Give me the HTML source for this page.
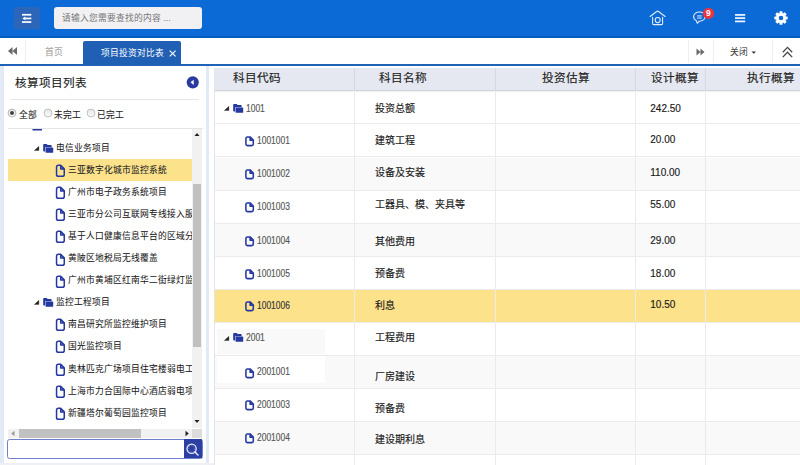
<!DOCTYPE html>
<html lang="zh-CN">
<head>
<meta charset="utf-8">
<style>
*{box-sizing:border-box;margin:0;padding:0}
html,body{width:800px;height:465px;overflow:hidden;background:#fff;font-family:"Liberation Sans",sans-serif;color:#333}
.a{position:absolute;white-space:nowrap}
#hdr{position:absolute;left:0;top:0;width:800px;height:38px;background:#0b6ad5;border-bottom:2px solid #075cc0}
#menu{left:14px;top:7px;width:26px;height:22px;background:#2d66b8;border-radius:2px}
#search{left:54px;top:7px;width:148px;height:22px;background:#f1f1f3;border-radius:3px;font-size:8.75px;color:#777;line-height:22px;padding-left:8px}
#tabs{position:absolute;left:0;top:38px;width:800px;height:26px;background:#fff}
#tabline{position:absolute;left:0;top:64px;width:800px;height:2px;background:#2062b8}
.sep{position:absolute;top:40px;width:1px;height:23px;background:#eeeeee}
#act{left:83px;top:41px;width:98px;height:23px;background:#2060b4;border-radius:2px 2px 0 0;color:#fff;font-size:8.75px;line-height:25px}
#strip{position:absolute;left:0;top:66px;width:3.5px;height:399px;background:#e2eaf6}
#strip2{position:absolute;left:206px;top:66px;width:3px;height:399px;background:#e2eaf6}
#bot{position:absolute;left:0;top:463.4px;width:214px;height:2px;background:#eef0f3}
.tt{font-size:8.75px;color:#222;line-height:12px}
.th{font-size:11.6px;color:#222;line-height:14px}
.code{font-size:10.2px;color:#555;line-height:12px;transform:scaleX(0.83);transform-origin:0 0}
.nm{font-size:10px;color:#1a1a1a;line-height:12px}
.row{position:absolute;left:214px;width:586px}
.vl{position:absolute;width:1px;background:#ebebeb}
.nm,.th,.code{-webkit-text-stroke:0.15px currentColor}
.tt{-webkit-text-stroke:0.06px currentColor}
</style>
</head>
<body>
<div id="hdr"></div>
<div class="a" id="menu">
  <svg width="26" height="22" viewBox="0 0 26 22" style="position:absolute;left:0;top:0">
    <rect x="8" y="6.9" width="9.3" height="1.7" fill="#fff"/>
    <rect x="10.6" y="10.6" width="6.7" height="1.7" fill="#fff"/>
    <rect x="8" y="14.2" width="9.3" height="1.7" fill="#fff"/>
    <path d="M8.4 11.45 L11.2 9.6 L11.2 13.3 Z" fill="#fff"/>
  </svg>
</div>
<div class="a" id="search">请输入您需要查找的内容 ...</div>

<!-- header icons -->
<svg class="a" style="left:648px;top:8px" width="20" height="20" viewBox="0 0 20 20">
  <path d="M2.1 8.5 L8.7 3.5 Q9.6 2.8 10.5 3.5 L17.1 8.5 M4.6 9.2 L4.6 15.4 Q4.6 16.6 5.8 16.6 L13.4 16.6 Q14.6 16.6 14.6 15.4 L14.6 9.2" fill="none" stroke="#e6eefa" stroke-width="1.05" stroke-linecap="round" stroke-linejoin="round"/>
  <circle cx="9.7" cy="12.1" r="2.55" fill="none" stroke="#e6eefa" stroke-width="1.05"/>
</svg>
<svg class="a" style="left:690px;top:3px" width="28" height="24" viewBox="0 0 28 24">
  <path d="M9.3 9 C6 9 3.6 11 3.6 13.6 C3.6 15.3 4.6 16.8 6.3 17.6 L7.3 20.3 L9.3 18.2 C12.6 18.2 15.1 16.2 15.1 13.6 C15.1 11 12.6 9 9.3 9 Z" fill="none" stroke="#e6eefa" stroke-width="1.05" stroke-linejoin="round"/>
  <rect x="7.1" y="12.4" width="4.6" height="0.75" fill="#d8e4f6"/>
  <rect x="7.1" y="13.6" width="4.6" height="0.75" fill="#d8e4f6"/>
  <rect x="7.1" y="14.8" width="4.6" height="0.75" fill="#d8e4f6"/>
  <circle cx="18.5" cy="10.4" r="5.6" fill="#ec3441"/>
  <text x="18.4" y="13.4" font-family="Liberation Sans" font-size="8.5" font-weight="bold" fill="#fff" text-anchor="middle">9</text>
</svg>
<svg class="a" style="left:735px;top:13px" width="11" height="10" viewBox="0 0 11 10">
  <rect x="0" y="1" width="10.2" height="1.8" fill="#e8f0fb"/>
  <rect x="0" y="4.2" width="10.2" height="1.8" fill="#e8f0fb"/>
  <rect x="0" y="7.5" width="10.2" height="1.8" fill="#e8f0fb"/>
</svg>
<svg class="a" style="left:773px;top:10.2px" width="16" height="16" viewBox="0 0 16 16">
  <path fill-rule="evenodd" fill="#fff" d="M6.30 3.40 L6.65 1.30 L9.35 1.30 L9.70 3.40 L10.05 3.55 L11.78 2.31 L13.69 4.22 L12.45 5.95 L12.60 6.30 L14.70 6.65 L14.70 9.35 L12.60 9.70 L12.45 10.05 L13.69 11.78 L11.78 13.69 L10.05 12.45 L9.70 12.60 L9.35 14.70 L6.65 14.70 L6.30 12.60 L5.95 12.45 L4.22 13.69 L2.31 11.78 L3.55 10.05 L3.40 9.70 L1.30 9.35 L1.30 6.65 L3.40 6.30 L3.55 5.95 L2.31 4.22 L4.22 2.31 L5.95 3.55Z M8 5.7 A2.3 2.3 0 1 0 8 10.3 A2.3 2.3 0 1 0 8 5.7Z"/>
</svg>

<!-- tabs -->
<div id="tabs"></div>
<svg class="a" style="left:7px;top:46px" width="12" height="10" viewBox="0 0 12 10">
  <path d="M1 5 L5.5 1 L5.5 9 Z M5.5 5 L10 1 L10 9 Z" fill="#6a6a6a"/>
</svg>
<div class="sep" style="left:25px"></div>
<div class="a tt" style="left:44.5px;top:46.2px;color:#999">首页</div>
<div class="a" id="act"><span style="position:absolute;left:18px">项目投资对比表</span><svg style="position:absolute;left:86px;top:8.8px" width="8" height="8" viewBox="0 0 8 8"><path d="M0.7 0.6 L6.6 6.3 M6.6 0.6 L0.7 6.3" stroke="#fff" stroke-width="1.15"/></svg></div>
<div class="sep" style="left:688px"></div>
<svg class="a" style="left:695px;top:47px" width="12" height="10" viewBox="0 0 12 10">
  <path d="M1.5 1.5 L5.5 5 L1.5 8.5 Z M5.5 1.5 L9.5 5 L5.5 8.5 Z" fill="#6a6a6a"/>
</svg>
<div class="sep" style="left:713px"></div>
<div class="a tt" style="left:730px;top:46.2px;color:#444">关闭</div>
<svg class="a" style="left:751px;top:50.5px" width="6" height="4" viewBox="0 0 6 4"><path d="M0.5 0.5 L5 0.5 L2.75 2.8 Z" fill="#333"/></svg>
<div class="sep" style="left:771.5px"></div>
<svg class="a" style="left:781px;top:45.5px" width="13" height="13" viewBox="0 0 13 13">
  <path d="M1.8 6.3 L6.5 1.4 L11.2 6.3 M1.8 11.1 L6.5 6.2 L11.2 11.1" fill="none" stroke="#444" stroke-width="1.25"/>
</svg>
<div id="tabline"></div>

<div id="strip"></div>
<div id="strip2"></div>
<div id="bot"></div>

<!-- left panel -->
<div class="a th" style="left:14.5px;top:76px;font-size:11.6px">核算项目列表</div>
<svg class="a" style="left:186px;top:75.5px" width="14" height="14" viewBox="0 0 14 14">
  <circle cx="6.75" cy="6.35" r="6.05" fill="#2a3a9f"/>
  <path d="M4.5 6.35 L7.7 3.7 L7.7 9 Z" fill="#fff"/>
</svg>
<div class="a" style="left:11px;top:99px;width:188px;height:1px;background:#e6e6e6"></div>
<svg class="a" style="left:6.5px;top:107.8px" width="10" height="10" viewBox="0 0 10 10">
  <defs><linearGradient id="rg" x1="0" y1="0" x2="0" y2="1"><stop offset="0" stop-color="#e6e6e6"/><stop offset="1" stop-color="#fbfbfb"/></linearGradient></defs>
  <circle cx="5" cy="5" r="3.95" fill="url(#rg)" stroke="#a8a8a8" stroke-width="0.8"/>
  <circle cx="5" cy="5" r="2" fill="#444"/>
</svg>
<div class="a tt" style="left:18.5px;top:109px">全部</div>
<svg class="a" style="left:42.5px;top:107.8px" width="10" height="10" viewBox="0 0 10 10">
  <circle cx="5" cy="5" r="3.95" fill="url(#rg)" stroke="#b4b4b4" stroke-width="0.8"/>
</svg>
<div class="a tt" style="left:53.5px;top:109px">未完工</div>
<svg class="a" style="left:85.5px;top:107.8px" width="10" height="10" viewBox="0 0 10 10">
  <circle cx="5" cy="5" r="3.95" fill="url(#rg)" stroke="#b4b4b4" stroke-width="0.8"/>
</svg>
<div class="a tt" style="left:97px;top:109px">已完工</div>

<!-- tree box -->
<div class="a" style="left:8px;top:128px;width:195px;height:1px;background:#e4e4e4"></div>

<div class="a" id="tree" style="left:8px;top:129px;width:184px;height:299px;overflow:hidden">
<svg class="a" style="left:24px;top:-1px" width="11" height="9" viewBox="0 0 11 9"><path d="M0.5 0 L10 0 L10 2.5 L0.5 2.5Z" fill="#2438a0"/></svg>
<svg class="a" style="left:26px;top:17px" width="6" height="5" viewBox="0 0 6 5"><path d="M0.3 4.5 L4.9 0.3 L4.9 4.5Z" fill="#222" stroke="#222" stroke-width="0.3" stroke-linejoin="round"/></svg>
<svg class="a" style="left:35px;top:14.5px" width="11" height="9" viewBox="0 0 11 9"><path d="M0.2 0.8 Q0.2 0 1 0 L3.6 0 L4.6 1 L8 1 Q8.6 1 8.6 1.6 L8.6 3.2 L2.2 3.2 L2.2 7.6 L1 7.6 Q0.2 7.6 0.2 6.8Z" fill="#2438a0"/><rect x="2.6" y="3.6" width="7.6" height="5.2" rx="0.6" fill="#2438a0"/></svg>
<div class="a tt" style="left:48px;top:12.9px">电信业务项目</div>
<div class="a" style="left:0;top:29.6px;width:184px;height:22px;background:#fde28c"></div>
<svg class="a" style="left:47px;top:35px" width="11" height="14" viewBox="0 0 11 14"><path d="M1.55 3.2 Q1.55 1.35 3.4 1.35 L5.7 1.35 L9.25 4.9 L9.25 10.4 Q9.25 12.25 7.4 12.25 L3.4 12.25 Q1.55 12.25 1.55 10.4 Z M5.7 1.6 L5.7 5.1 L9 5.1" fill="none" stroke="#2438a0" stroke-width="1.5" stroke-linejoin="round"/></svg>
<div class="a tt" style="left:59.7px;top:34.9px">三亚数字化城市监控系统</div>
<svg class="a" style="left:47px;top:57px" width="11" height="14" viewBox="0 0 11 14"><path d="M1.55 3.2 Q1.55 1.35 3.4 1.35 L5.7 1.35 L9.25 4.9 L9.25 10.4 Q9.25 12.25 7.4 12.25 L3.4 12.25 Q1.55 12.25 1.55 10.4 Z M5.7 1.6 L5.7 5.1 L9 5.1" fill="none" stroke="#2438a0" stroke-width="1.5" stroke-linejoin="round"/></svg>
<div class="a tt" style="left:59.7px;top:56.9px">广州市电子政务系统项目</div>
<svg class="a" style="left:47px;top:79px" width="11" height="14" viewBox="0 0 11 14"><path d="M1.55 3.2 Q1.55 1.35 3.4 1.35 L5.7 1.35 L9.25 4.9 L9.25 10.4 Q9.25 12.25 7.4 12.25 L3.4 12.25 Q1.55 12.25 1.55 10.4 Z M5.7 1.6 L5.7 5.1 L9 5.1" fill="none" stroke="#2438a0" stroke-width="1.5" stroke-linejoin="round"/></svg>
<div class="a tt" style="left:59.7px;top:78.9px">三亚市分公司互联网专线接入服务</div>
<svg class="a" style="left:47px;top:101px" width="11" height="14" viewBox="0 0 11 14"><path d="M1.55 3.2 Q1.55 1.35 3.4 1.35 L5.7 1.35 L9.25 4.9 L9.25 10.4 Q9.25 12.25 7.4 12.25 L3.4 12.25 Q1.55 12.25 1.55 10.4 Z M5.7 1.6 L5.7 5.1 L9 5.1" fill="none" stroke="#2438a0" stroke-width="1.5" stroke-linejoin="round"/></svg>
<div class="a tt" style="left:59.7px;top:100.9px">基于人口健康信息平台的区域分级</div>
<svg class="a" style="left:47px;top:123.5px" width="11" height="14" viewBox="0 0 11 14"><path d="M1.55 3.2 Q1.55 1.35 3.4 1.35 L5.7 1.35 L9.25 4.9 L9.25 10.4 Q9.25 12.25 7.4 12.25 L3.4 12.25 Q1.55 12.25 1.55 10.4 Z M5.7 1.6 L5.7 5.1 L9 5.1" fill="none" stroke="#2438a0" stroke-width="1.5" stroke-linejoin="round"/></svg>
<div class="a tt" style="left:59.7px;top:123.4px">黄陂区地税局无线覆盖</div>
<svg class="a" style="left:47px;top:145.5px" width="11" height="14" viewBox="0 0 11 14"><path d="M1.55 3.2 Q1.55 1.35 3.4 1.35 L5.7 1.35 L9.25 4.9 L9.25 10.4 Q9.25 12.25 7.4 12.25 L3.4 12.25 Q1.55 12.25 1.55 10.4 Z M5.7 1.6 L5.7 5.1 L9 5.1" fill="none" stroke="#2438a0" stroke-width="1.5" stroke-linejoin="round"/></svg>
<div class="a tt" style="left:59.7px;top:145.4px">广州市黄埔区红南华二街绿灯监控</div>
<svg class="a" style="left:26px;top:171.3px" width="6" height="5" viewBox="0 0 6 5"><path d="M0.3 4.5 L4.9 0.3 L4.9 4.5Z" fill="#222" stroke="#222" stroke-width="0.3" stroke-linejoin="round"/></svg>
<svg class="a" style="left:35px;top:168.8px" width="11" height="9" viewBox="0 0 11 9"><path d="M0.2 0.8 Q0.2 0 1 0 L3.6 0 L4.6 1 L8 1 Q8.6 1 8.6 1.6 L8.6 3.2 L2.2 3.2 L2.2 7.6 L1 7.6 Q0.2 7.6 0.2 6.8Z" fill="#2438a0"/><rect x="2.6" y="3.6" width="7.6" height="5.2" rx="0.6" fill="#2438a0"/></svg>
<div class="a tt" style="left:48px;top:167.2px">监控工程项目</div>
<svg class="a" style="left:47px;top:189.4px" width="11" height="14" viewBox="0 0 11 14"><path d="M1.55 3.2 Q1.55 1.35 3.4 1.35 L5.7 1.35 L9.25 4.9 L9.25 10.4 Q9.25 12.25 7.4 12.25 L3.4 12.25 Q1.55 12.25 1.55 10.4 Z M5.7 1.6 L5.7 5.1 L9 5.1" fill="none" stroke="#2438a0" stroke-width="1.5" stroke-linejoin="round"/></svg>
<div class="a tt" style="left:59.7px;top:189.3px">南昌研究所监控维护项目</div>
<svg class="a" style="left:47px;top:211.4px" width="11" height="14" viewBox="0 0 11 14"><path d="M1.55 3.2 Q1.55 1.35 3.4 1.35 L5.7 1.35 L9.25 4.9 L9.25 10.4 Q9.25 12.25 7.4 12.25 L3.4 12.25 Q1.55 12.25 1.55 10.4 Z M5.7 1.6 L5.7 5.1 L9 5.1" fill="none" stroke="#2438a0" stroke-width="1.5" stroke-linejoin="round"/></svg>
<div class="a tt" style="left:59.7px;top:211.3px">国光监控项目</div>
<svg class="a" style="left:47px;top:233.6px" width="11" height="14" viewBox="0 0 11 14"><path d="M1.55 3.2 Q1.55 1.35 3.4 1.35 L5.7 1.35 L9.25 4.9 L9.25 10.4 Q9.25 12.25 7.4 12.25 L3.4 12.25 Q1.55 12.25 1.55 10.4 Z M5.7 1.6 L5.7 5.1 L9 5.1" fill="none" stroke="#2438a0" stroke-width="1.5" stroke-linejoin="round"/></svg>
<div class="a tt" style="left:59.7px;top:233.5px">奥林匹克广场项目住宅楼弱电工程</div>
<svg class="a" style="left:47px;top:255.8px" width="11" height="14" viewBox="0 0 11 14"><path d="M1.55 3.2 Q1.55 1.35 3.4 1.35 L5.7 1.35 L9.25 4.9 L9.25 10.4 Q9.25 12.25 7.4 12.25 L3.4 12.25 Q1.55 12.25 1.55 10.4 Z M5.7 1.6 L5.7 5.1 L9 5.1" fill="none" stroke="#2438a0" stroke-width="1.5" stroke-linejoin="round"/></svg>
<div class="a tt" style="left:59.7px;top:255.7px">上海市力合国际中心酒店弱电项目</div>
<svg class="a" style="left:47px;top:277.6px" width="11" height="14" viewBox="0 0 11 14"><path d="M1.55 3.2 Q1.55 1.35 3.4 1.35 L5.7 1.35 L9.25 4.9 L9.25 10.4 Q9.25 12.25 7.4 12.25 L3.4 12.25 Q1.55 12.25 1.55 10.4 Z M5.7 1.6 L5.7 5.1 L9 5.1" fill="none" stroke="#2438a0" stroke-width="1.5" stroke-linejoin="round"/></svg>
<div class="a tt" style="left:59.7px;top:277.5px">新疆塔尔葡萄园监控项目</div>
</div>
<div class="a" style="left:215px;top:91.45px;width:585px;height:33.03px;background:#fff;border-bottom:1px solid #ebebeb"></div>
<svg class="a" style="left:224px;top:106.45px" width="6" height="5" viewBox="0 0 6 5"><path d="M0.3 4.5 L4.9 0.3 L4.9 4.5Z" fill="#222" stroke="#222" stroke-width="0.3" stroke-linejoin="round"/></svg>
<svg class="a" style="left:233px;top:104.05px" width="11" height="9" viewBox="0 0 11 9"><path d="M0.2 0.8 Q0.2 0 1 0 L3.6 0 L4.6 1 L8 1 Q8.6 1 8.6 1.6 L8.6 3.2 L2.2 3.2 L2.2 7.6 L1 7.6 Q0.2 7.6 0.2 6.8Z" fill="#2438a0"/><rect x="2.6" y="3.6" width="7.6" height="5.2" rx="0.6" fill="#2438a0"/></svg>
<div class="a code" style="left:245.5px;top:102.65px">1001</div>
<div class="a nm" style="left:374.7px;top:103.3px">投资总额</div>
<div class="a nm" style="left:650.3px;top:102.7px">242.50</div>
<div class="a" style="left:215px;top:124.48px;width:585px;height:33.03px;background:#fff;border-bottom:1px solid #ebebeb"></div>
<svg class="a" style="left:244px;top:135.25px" width="11" height="12" viewBox="0 0 11 12"><path d="M1.9 3.5 Q1.9 1.9 3.5 1.9 L6.1 1.9 L9.3 5.1 L9.3 9 Q9.3 10.6 7.7 10.6 L3.5 10.6 Q1.9 10.6 1.9 9 Z M6.1 2.2 L6.1 5.2 L9 5.2" fill="none" stroke="#2438a0" stroke-width="1.55" stroke-linejoin="round"/></svg>
<div class="a code" style="left:257px;top:135.15px;">1001001</div>
<div class="a nm" style="left:374.7px;top:134.9px">建筑工程</div>
<div class="a nm" style="left:650.3px;top:134.3px">20.00</div>
<div class="a" style="left:215px;top:157.51px;width:585px;height:33.03px;background:#f9f9f9;border-bottom:1px solid #ebebeb"></div>
<svg class="a" style="left:244px;top:168.2px" width="11" height="12" viewBox="0 0 11 12"><path d="M1.9 3.5 Q1.9 1.9 3.5 1.9 L6.1 1.9 L9.3 5.1 L9.3 9 Q9.3 10.6 7.7 10.6 L3.5 10.6 Q1.9 10.6 1.9 9 Z M6.1 2.2 L6.1 5.2 L9 5.2" fill="none" stroke="#2438a0" stroke-width="1.55" stroke-linejoin="round"/></svg>
<div class="a code" style="left:257px;top:168.1px;">1001002</div>
<div class="a nm" style="left:374.7px;top:167.2px">设备及安装</div>
<div class="a nm" style="left:650.3px;top:166.6px">110.00</div>
<div class="a" style="left:215px;top:190.54px;width:585px;height:33.03px;background:#fff;border-bottom:1px solid #ebebeb"></div>
<svg class="a" style="left:244px;top:201.2px" width="11" height="12" viewBox="0 0 11 12"><path d="M1.9 3.5 Q1.9 1.9 3.5 1.9 L6.1 1.9 L9.3 5.1 L9.3 9 Q9.3 10.6 7.7 10.6 L3.5 10.6 Q1.9 10.6 1.9 9 Z M6.1 2.2 L6.1 5.2 L9 5.2" fill="none" stroke="#2438a0" stroke-width="1.55" stroke-linejoin="round"/></svg>
<div class="a code" style="left:257px;top:201.1px;">1001003</div>
<div class="a nm" style="left:374.7px;top:199.3px">工器具、模、夹具等</div>
<div class="a nm" style="left:650.3px;top:198.7px">55.00</div>
<div class="a" style="left:215px;top:223.57px;width:585px;height:33.03px;background:#f9f9f9;border-bottom:1px solid #ebebeb"></div>
<svg class="a" style="left:244px;top:234.7px" width="11" height="12" viewBox="0 0 11 12"><path d="M1.9 3.5 Q1.9 1.9 3.5 1.9 L6.1 1.9 L9.3 5.1 L9.3 9 Q9.3 10.6 7.7 10.6 L3.5 10.6 Q1.9 10.6 1.9 9 Z M6.1 2.2 L6.1 5.2 L9 5.2" fill="none" stroke="#2438a0" stroke-width="1.55" stroke-linejoin="round"/></svg>
<div class="a code" style="left:257px;top:234.6px;">1001004</div>
<div class="a nm" style="left:374.7px;top:236px">其他费用</div>
<div class="a nm" style="left:650.3px;top:235.4px">29.00</div>
<div class="a" style="left:215px;top:256.6px;width:585px;height:33.03px;background:#fff;border-bottom:1px solid #ebebeb"></div>
<svg class="a" style="left:244px;top:267.8px" width="11" height="12" viewBox="0 0 11 12"><path d="M1.9 3.5 Q1.9 1.9 3.5 1.9 L6.1 1.9 L9.3 5.1 L9.3 9 Q9.3 10.6 7.7 10.6 L3.5 10.6 Q1.9 10.6 1.9 9 Z M6.1 2.2 L6.1 5.2 L9 5.2" fill="none" stroke="#2438a0" stroke-width="1.55" stroke-linejoin="round"/></svg>
<div class="a code" style="left:257px;top:267.7px;">1001005</div>
<div class="a nm" style="left:374.7px;top:268.4px">预备费</div>
<div class="a nm" style="left:650.3px;top:267.8px">18.00</div>
<div class="a" style="left:215px;top:289.63px;width:585px;height:33.03px;background:#fde28c;border-bottom:1px solid #ebebeb"></div>
<svg class="a" style="left:244px;top:300.4px" width="11" height="12" viewBox="0 0 11 12"><path d="M1.9 3.5 Q1.9 1.9 3.5 1.9 L6.1 1.9 L9.3 5.1 L9.3 9 Q9.3 10.6 7.7 10.6 L3.5 10.6 Q1.9 10.6 1.9 9 Z M6.1 2.2 L6.1 5.2 L9 5.2" fill="none" stroke="#2438a0" stroke-width="1.55" stroke-linejoin="round"/></svg>
<div class="a code" style="left:257px;top:300.3px;color:#333">1001006</div>
<div class="a nm" style="left:374.7px;top:299.8px">利息</div>
<div class="a nm" style="left:650.3px;top:299.2px">10.50</div>
<div class="a" style="left:215px;top:322.66px;width:585px;height:33.03px;background:#fff;border-bottom:1px solid #ebebeb"></div>
<div class="a" style="left:216.8px;top:329px;width:108.2px;height:25.3px;background:#f9f9f9"></div>
<svg class="a" style="left:224px;top:335.5px" width="6" height="5" viewBox="0 0 6 5"><path d="M0.3 4.5 L4.9 0.3 L4.9 4.5Z" fill="#222" stroke="#222" stroke-width="0.3" stroke-linejoin="round"/></svg>
<svg class="a" style="left:233px;top:333.1px" width="11" height="9" viewBox="0 0 11 9"><path d="M0.2 0.8 Q0.2 0 1 0 L3.6 0 L4.6 1 L8 1 Q8.6 1 8.6 1.6 L8.6 3.2 L2.2 3.2 L2.2 7.6 L1 7.6 Q0.2 7.6 0.2 6.8Z" fill="#2438a0"/><rect x="2.6" y="3.6" width="7.6" height="5.2" rx="0.6" fill="#2438a0"/></svg>
<div class="a code" style="left:245.5px;top:331.7px">2001</div>
<div class="a nm" style="left:374.7px;top:332.2px">工程费用</div>
<div class="a" style="left:215px;top:355.69px;width:585px;height:33.03px;background:#f9f9f9;border-bottom:1px solid #ebebeb"></div>
<div class="a" style="left:216.8px;top:355.5px;width:108.2px;height:27.8px;background:#fff"></div>
<svg class="a" style="left:244px;top:366.5px" width="11" height="12" viewBox="0 0 11 12"><path d="M1.9 3.5 Q1.9 1.9 3.5 1.9 L6.1 1.9 L9.3 5.1 L9.3 9 Q9.3 10.6 7.7 10.6 L3.5 10.6 Q1.9 10.6 1.9 9 Z M6.1 2.2 L6.1 5.2 L9 5.2" fill="none" stroke="#2438a0" stroke-width="1.55" stroke-linejoin="round"/></svg>
<div class="a code" style="left:257px;top:366.4px;">2001001</div>
<div class="a nm" style="left:374.7px;top:371.2px">厂房建设</div>
<div class="a" style="left:215px;top:388.72px;width:585px;height:33.03px;background:#fff;border-bottom:1px solid #ebebeb"></div>
<svg class="a" style="left:244px;top:398.9px" width="11" height="12" viewBox="0 0 11 12"><path d="M1.9 3.5 Q1.9 1.9 3.5 1.9 L6.1 1.9 L9.3 5.1 L9.3 9 Q9.3 10.6 7.7 10.6 L3.5 10.6 Q1.9 10.6 1.9 9 Z M6.1 2.2 L6.1 5.2 L9 5.2" fill="none" stroke="#2438a0" stroke-width="1.55" stroke-linejoin="round"/></svg>
<div class="a code" style="left:257px;top:398.8px;">2001003</div>
<div class="a nm" style="left:374.7px;top:402.5px">预备费</div>
<div class="a" style="left:215px;top:421.75px;width:585px;height:33.03px;background:#f9f9f9;border-bottom:1px solid #ebebeb"></div>
<svg class="a" style="left:244px;top:431.8px" width="11" height="12" viewBox="0 0 11 12"><path d="M1.9 3.5 Q1.9 1.9 3.5 1.9 L6.1 1.9 L9.3 5.1 L9.3 9 Q9.3 10.6 7.7 10.6 L3.5 10.6 Q1.9 10.6 1.9 9 Z M6.1 2.2 L6.1 5.2 L9 5.2" fill="none" stroke="#2438a0" stroke-width="1.55" stroke-linejoin="round"/></svg>
<div class="a code" style="left:257px;top:431.7px;">2001004</div>
<div class="a nm" style="left:374.7px;top:434.4px">建设期利息</div>
<div class="a" style="left:215px;top:454.78px;width:585px;height:33.03px;background:#fff;border-bottom:1px solid #ebebeb"></div>
<div class="vl" style="left:354px;top:91.5px;height:374px"></div>
<div class="vl" style="left:495px;top:91.5px;height:374px"></div>
<div class="vl" style="left:635px;top:91.5px;height:374px"></div>
<div class="vl" style="left:705px;top:91.5px;height:374px"></div>

<!-- scrollbar v -->
<div class="a" style="left:192px;top:129px;width:10px;height:299px;background:#f1f1f1"></div>
<div class="a" style="left:193px;top:184px;width:8px;height:163px;background:#c1c1c1"></div>
<svg class="a" style="left:194px;top:132px" width="6" height="5" viewBox="0 0 6 5"><path d="M0.5 4 L3 1 L5.5 4 Z" fill="#222"/></svg>
<svg class="a" style="left:194px;top:419px" width="6" height="5" viewBox="0 0 6 5"><path d="M0.5 1 L3 4 L5.5 1 Z" fill="#222"/></svg>
<!-- scrollbar h -->
<div class="a" style="left:8px;top:428.5px;width:194px;height:9.5px;background:#f1f1f1"></div>
<div class="a" style="left:18.5px;top:429px;width:122px;height:9px;background:#c1c1c1"></div>
<svg class="a" style="left:10px;top:430px" width="6" height="7" viewBox="0 0 6 7"><path d="M4.5 0.8 L1.2 3.5 L4.5 6.2 Z" fill="#999"/></svg>
<svg class="a" style="left:184px;top:430px" width="6" height="7" viewBox="0 0 6 7"><path d="M1.5 0.8 L4.8 3.5 L1.5 6.2 Z" fill="#222"/></svg>
<div class="a" style="left:192px;top:428.5px;width:10px;height:9.5px;background:#dcdcdc"></div>
<!-- search input -->
<div class="a" style="left:7.3px;top:439.4px;width:195.6px;height:19.5px;border:1px solid #6f80cf;border-radius:2.5px;background:#fff"></div>
<div class="a" style="left:184.2px;top:439.4px;width:17.4px;height:19px;background:#2c3fa3"></div>
<svg class="a" style="left:185px;top:441px" width="16" height="16" viewBox="0 0 16 16">
  <circle cx="6.6" cy="7.7" r="4.6" fill="none" stroke="#e8ebf8" stroke-width="1.3"/>
  <path d="M9.9 11 L13 14" stroke="#e8ebf8" stroke-width="1.5" stroke-linecap="round"/>
  <circle cx="6.6" cy="7.7" r="3.2" fill="none" stroke="#8a96d0" stroke-width="0.6" stroke-dasharray="1.2 1.2"/>
</svg>

<!-- table -->
<div class="a" style="left:214px;top:67.6px;width:586px;height:23.9px;background:#e5e8f0;border-bottom:1px solid #d2d5dc;box-shadow:0 1px 1px rgba(0,0,0,0.05)"></div>
<div class="a" style="left:214px;top:90px;width:1px;height:375px;background:#e5e5e5"></div>

<div class="a" style="left:354px;top:67.6px;width:1px;height:23px;background:#d5d8df"></div>
<div class="a" style="left:495px;top:67.6px;width:1px;height:23px;background:#d5d8df"></div>
<div class="a" style="left:635px;top:67.6px;width:1px;height:23px;background:#d5d8df"></div>
<div class="a" style="left:705px;top:67.6px;width:1px;height:23px;background:#d5d8df"></div>
<div class="a th" style="left:233px;top:71.3px">科目代码</div>
<div class="a th" style="left:379px;top:71.3px">科目名称</div>
<div class="a th" style="left:542px;top:71.3px">投资估算</div>
<div class="a th" style="left:650.5px;top:71.3px">设计概算</div>
<div class="a th" style="left:747px;top:71.3px">执行概算</div>

</body>
</html>
